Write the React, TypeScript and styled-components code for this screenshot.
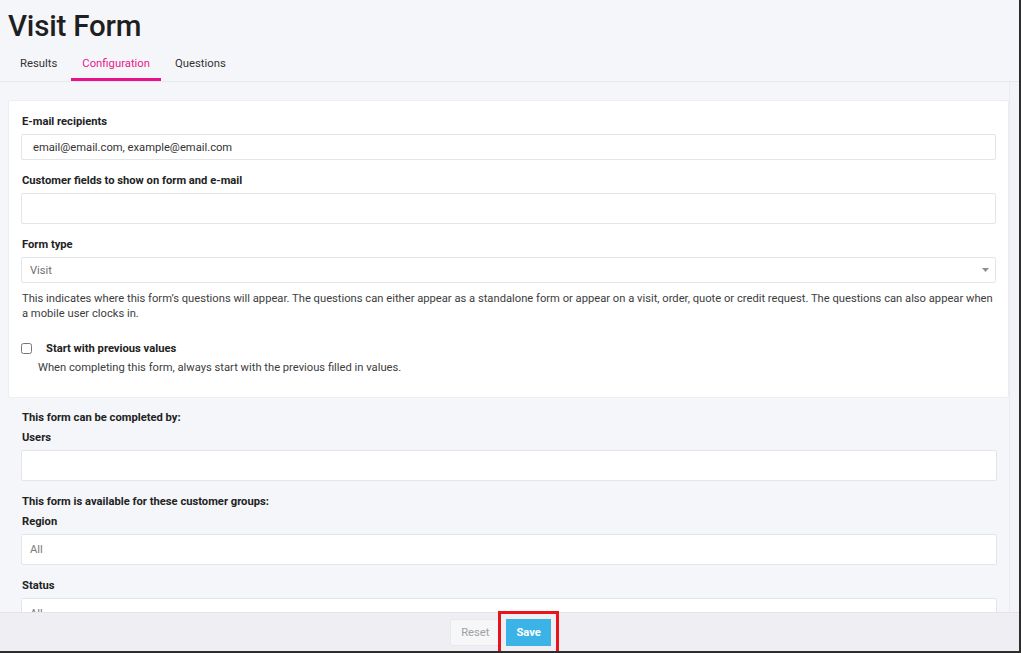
import React from 'react';
import styled, { createGlobalStyle } from 'styled-components';

const GlobalStyle = createGlobalStyle`
  html, body {
    margin: 0;
    padding: 0;
    background: #f5f6fa;
    font-family: Roboto, "Liberation Sans", Arial, sans-serif;
    color: #222;
  }
  * {
    box-sizing: border-box;
  }
`;

const tabs = ['Results', 'Configuration', 'Questions'];

export default function App() {
  return (
    <>
      <GlobalStyle />
      <Frame>
        <Header>
          <Title>Visit Form</Title>
          <TabBar>
            {tabs.map((tab) => (
              <Tab key={tab} $active={tab === 'Configuration'}>
                {tab}
              </Tab>
            ))}
          </TabBar>
        </Header>

        <Body>
          <Main>
            <Card>
              <Field>
                <Label>E-mail recipients</Label>
                <TextInput readOnly defaultValue="email@email.com, example@email.com" $pad={11} />
              </Field>
              <Field>
                <Label>Customer fields to show on form and e-mail</Label>
                <TextInput readOnly $tall />
              </Field>
              <Field $gap={8}>
                <Label>Form type</Label>
                <SelectBox>
                  <SelectValue>Visit</SelectValue>
                  <svg width="7" height="4" viewBox="0 0 7 4">
                    <path d="M0 0 L7 0 L3.5 4 Z" fill="#8f8f8f" />
                  </svg>
                </SelectBox>
              </Field>
              <HelpText>
                This indicates where this form&rsquo;s questions will appear. The questions can either appear as a
                standalone form or appear on a visit, order, quote or credit request. The questions can also appear
                when a mobile user clocks in.
              </HelpText>
              <CheckRow>
                <Checkbox type="checkbox" />
                <CheckLabel>Start with previous values</CheckLabel>
              </CheckRow>
              <CheckHint>When completing this form, always start with the previous filled in values.</CheckHint>
            </Card>

            <Section>
              <SectionTitle>This form can be completed by:</SectionTitle>
              <Field>
                <Label>Users</Label>
                <TextInput readOnly $tall />
              </Field>
              <SectionTitle>This form is available for these customer groups:</SectionTitle>
              <Field>
                <Label>Region</Label>
                <TextInput readOnly defaultValue="All" $tall $muted />
              </Field>
              <Field>
                <Label>Status</Label>
                <TextInput readOnly defaultValue="All" $tall $muted />
              </Field>
            </Section>
          </Main>
          <ScrollTrack />
        </Body>

        <Footer>
          <ResetButton>Reset</ResetButton>
          <SaveButton>Save</SaveButton>
        </Footer>
      </Frame>
    </>
  );
}

const Frame = styled.div`
  width: 1021px;
  height: 653px;
  display: flex;
  flex-direction: column;
  overflow: hidden;
  border-right: 2px solid #2d2d2d;
  border-bottom: 2px solid #2d2d2d;
  background: #f5f6fa;
`;

const Header = styled.div`
  padding: 9px 0 0 0;
  border-bottom: 1px solid #e6e8ee;
`;

const Title = styled.h1`
  margin: 0 0 0 8px;
  font-size: 29.5px;
  line-height: 34px;
  font-weight: 500;
  color: #1f1f1f;
  letter-spacing: -0.2px;
`;

const TabBar = styled.div`
  display: flex;
  gap: 3px;
  margin: 5px 0 0 9px;
`;

const Tab = styled.div<{ $active?: boolean }>`
  padding: 0 11px;
  height: 33px;
  line-height: 31px;
  font-size: 11.3px;
  color: ${(p) => (p.$active ? '#e8208a' : '#333')};
  border-bottom: 3px solid ${(p) => (p.$active ? '#e8128a' : 'transparent')};
`;

const Body = styled.div`
  flex: 1;
  display: flex;
  min-height: 0;
  overflow: hidden;
`;

const Main = styled.div`
  flex: 1;
  padding: 18px 0 0 8px;
`;

const ScrollTrack = styled.div`
  width: 10px;
  border-left: 1px solid #ebecf0;
  background: #f3f4f8;
`;

const Card = styled.div`
  background: #fff;
  border: 1px solid #eceef2;
  border-radius: 2px;
  padding: 13px 12px 22px 12px;
`;

const Section = styled.div`
  padding: 12px 12px 0 13px;
`;

const Field = styled.div<{ $gap?: number }>`
  display: flex;
  flex-direction: column;
  gap: 5px;
  margin-bottom: ${(p) => p.$gap ?? 13}px;
`;

const Label = styled.div`
  font-size: 11.2px;
  line-height: 15px;
  font-weight: 700;
  color: #222;
  padding-left: 1px;
`;

const SectionTitle = styled(Label)`
  margin-bottom: 5px;
`;

const TextInput = styled.input<{ $tall?: boolean; $muted?: boolean; $pad?: number }>`
  width: 100%;
  height: ${(p) => (p.$tall ? 31 : 26)}px;
  border: 1px solid #e3e5ea;
  border-radius: 2px;
  background: #fff;
  padding: 0 8px 0 ${(p) => p.$pad ?? 8}px;
  font-family: inherit;
  font-size: 11.2px;
  color: ${(p) => (p.$muted ? '#7a7a7a' : '#333')};
  outline: none;
`;

const SelectBox = styled.div`
  height: 26px;
  border: 1px solid #e3e5ea;
  border-radius: 2px;
  background: #fff;
  display: flex;
  align-items: center;
  justify-content: space-between;
  padding: 0 6px 0 8px;
`;

const SelectValue = styled.span`
  font-size: 11.2px;
  color: #6f6f6f;
`;

const HelpText = styled.p`
  margin: 0 0 20px 1px;
  font-size: 11.2px;
  line-height: 15px;
  color: #3d3d3d;
`;

const CheckRow = styled.div`
  display: flex;
  align-items: center;
  gap: 13px;
`;

const Checkbox = styled.input`
  margin: 0;
  width: 11px;
  height: 11px;
`;

const CheckLabel = styled(Label)`
  line-height: 15px;
`;

const CheckHint = styled.div`
  margin: 4px 0 0 17px;
  font-size: 11.2px;
  line-height: 15px;
  color: #3d3d3d;
`;

const Footer = styled.div`
  height: 39px;
  flex-shrink: 0;
  display: flex;
  align-items: center;
  justify-content: center;
  gap: 6px;
  padding-right: 18px;
  background: #efeff3;
  border-top: 1px solid #e3e4ea;
`;

const ResetButton = styled.button`
  height: 27px;
  padding: 0 10px;
  border: 1px solid #e8e9ee;
  border-radius: 2px;
  background: #f6f7f9;
  color: #a0a0a0;
  font-family: inherit;
  font-size: 11.2px;
`;

const SaveButton = styled.button`
  height: 27px;
  padding: 0 10px;
  border: none;
  border-radius: 0;
  background: #3cb3e6;
  color: #fff;
  font-family: inherit;
  font-size: 11.2px;
  font-weight: 700;
  outline: 3px solid #e8141c;
  outline-offset: 5px;
`;
